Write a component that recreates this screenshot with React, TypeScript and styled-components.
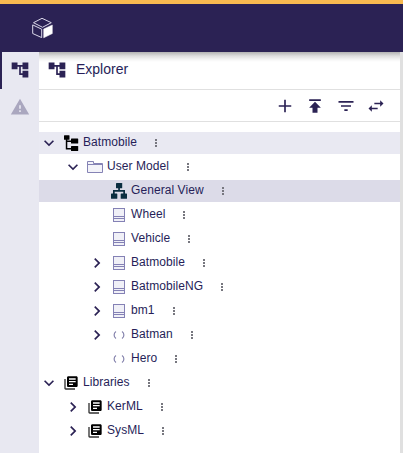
import React from 'react';
import styled, { createGlobalStyle } from 'styled-components';

const Global = createGlobalStyle`
  * { box-sizing: border-box; }
  body { margin: 0; background: #fff; font-family: "Liberation Sans", Arial, sans-serif; color: #261e58; overflow: hidden; }
`;
const Page = styled.div`display: flex; flex-direction: column; height: 453px; width: 403px;`;
const Header = styled.header`
  flex: none; height: 52px; border-top: 4px solid #f8ba50; background: #2b2254; padding: 13px 0 0 31px;
`;
const Body = styled.div`flex: 1; display: flex; min-height: 0; position: relative;`;
const Shade = styled.div`
  position: absolute; left: 39px; right: 3px; top: 0; height: 10px;
  background: linear-gradient(rgba(0,0,0,.3), rgba(0,0,0,.13) 40%, rgba(0,0,0,.03) 80%, transparent);
`;
const Rail = styled.nav`flex: none; width: 39px; background: #e8e8f1;`;
const RailTab = styled.div<{ $active?: boolean }>`
  height: 37px; display: flex; align-items: center; padding: 0 0 1px 8px;
  border-left: 2px solid ${p => (p.$active ? '#2b2254' : '#e8e8f1')};
  svg { display: block; }
`;
const Panel = styled.main`flex: 1; border-right: 3px solid #e0e0e0; background: #fff;`;
const Title = styled.div`
  display: flex; align-items: center; gap: 9px; height: 38px; padding: 0 0 2px 8px;
  border-bottom: 1px solid #e0e0e0; font-size: 14px; line-height: 16px;
`;
const TitleText = styled.span`padding-bottom: 1px;`;
const Toolbar = styled.div`
  display: flex; align-items: center; justify-content: flex-end; gap: 10.4px; height: 32px; padding: 0 14px 0 0;
  border-bottom: 1px solid #e0e0e0;
`;
const Tree = styled.div`display: flex; flex-direction: column; gap: 2px; padding-top: 10px;`;
const Row = styled.div<{ $depth: number; $bg?: string }>`
  display: flex; align-items: center; height: 22px; padding-left: ${p => p.$depth * 24}px;
  background: ${p => p.$bg || 'transparent'};
`;
const Toggle = styled.span`width: 20px; height: 20px; flex: none; svg { display: block; }`;
const IconSlot = styled.span`width: 16px; height: 16px; margin: 0 4px; flex: none; svg { display: block; }`;
const Label = styled.span`
  font-size: 12px; line-height: 18px; padding-bottom: 2px; letter-spacing: 0.07px; white-space: nowrap;
`;
const More = styled.svg`margin-left: 11px; flex: none; display: block;`;

const Glyph = ({ d, size = 20, color = '#2b2254' }: { d: string; size?: number; color?: string }) => (
  <svg width={size} height={size} viewBox="0 0 24 24" fill={color}><path d={d} /></svg>
);
const P = {
  tree: 'M22 11V3h-7v3H9V3H2v8h7V8h2v10h4v3h7v-8h-7v3h-2V8h2v3z',
  warning: 'M1 21h22L12 2 1 21zm12-3h-2v-2h2v2zm0-4h-2v-4h2v4z',
  add: 'M19.500 13h-6.500v6.500h-2v-6.500H4.500v-2h6.500V4.500h2v6.500h6.500v2z',
  publish: 'M5 4v2h14V4H5zm0 10h4v6h6v-6h4l-7-7-7 7z',
  filter: 'M10 18h4v-2h-4v2zM3 6v2h18V6H3zm3 7h12v-2H6v2z',
  swap: 'M6.99 11 3 15l3.990 4v-3H14v-2H6.990v-3zM21 9l-3.990-4v3H10v2h7.010v3L21 9z',
  down: 'M7.41 8.59 12 13.17l4.59-4.58L18 10l-6 6-6-6 1.41-1.41z',
  right: 'M8.59 16.59 13.17 12 8.59 7.41 10 6l6 6-6 6-1.41-1.41z',
  library: 'M20 2H8c-1.100 0-2 .9-2 2v12c0 1.100.9 2 2 2h12c1.100 0 2-.9 2-2V4c0-1.100-.9-2-2-2zm-1 9H9V9h10v2zm-4 4H9v-2h6v2zm4-8H9V5h10v2z',
  libraryBack: 'M4 6H2v14c0 1.100.9 2 2 2h14v-2H4V6z',
};

const Logo = () => (
  <svg width="22" height="22" viewBox="0 0 22 22" fill="none" stroke="#dcd9ea" strokeWidth="1" strokeLinejoin="round">
    <path d="M2.500 5.700 11 1.300l9.300 4.400-8.800 4.600zM1.700 7.900v8.600l9 4.100v-8.400z" />
    <path d="M12.700 12 21.300 8v8.600l-8.600 4.200z" fill="#fff" stroke="#fff" strokeWidth=".5" />
  </svg>
);

type Kind = 'project' | 'folder' | 'diagram' | 'part' | 'parens' | 'library';
const NodeIcon = ({ kind }: { kind: Kind }) => {
  switch (kind) {
    case 'project':
      return (
        <svg width="16" height="16" viewBox="0 0 16 16" fill="#000">
          <rect x="1" y="0.300" width="5.500" height="4.400" rx=".5" />
          <rect x="8" y="3.500" width="7.200" height="5" rx=".5" />
          <rect x="8" y="11" width="7.200" height="5" rx=".5" />
          <path d="M2.800 4h1.500v1.500H9V7H4.300v6H9v1.500H2.800z" />
        </svg>
      );
    case 'folder':
      return <svg width="16" height="16" viewBox="0 0 16 16" fill="#f3f3f9" stroke="#8583b5"><path d="M.5 13.500v-11h6v2h9v9z" /><path d="M.5 5.500h15" /></svg>;
    case 'diagram':
      return (
        <svg width="16" height="16" viewBox="0 0 16 16" fill="#0b2e40">
          <rect x="5" y="0" width="6.200" height="5.300" rx=".6" />
          <rect x="0" y="10.500" width="6.300" height="5.300" rx=".6" />
          <rect x="9.700" y="10.500" width="6.300" height="5.300" rx=".6" />
          <path d="M7.200 5h1.700v2H14v4h-1.700V8.700H3.700V11H2V7h5.200z" />
        </svg>
      );
    case 'part':
      return <svg width="16" height="16" viewBox="0 0 16 16" fill="#f0f0f7" stroke="#8481b5"><rect x="2.500" y="1.500" width="11" height="13" /><path d="M3 9.500h10M3 11.500h10" /></svg>;
    case 'parens':
      return <svg width="16" height="16" viewBox="0 0 16 16" fill="none" stroke="#8583ad" strokeWidth="1.200"><path d="M5 4.500C2.500 6 2.500 10 5 11.500M11 4.500c2.500 1.500 2.500 5.500 0 7" /></svg>;
    case 'library':
      return (
        <svg width="16" height="16" viewBox="0 0 24 24">
          <path d={P.libraryBack} fill="#333" />
          <path d={P.library} fill="#000" />
        </svg>
      );
  }
};

const rows: { depth: number; open?: boolean; kind: Kind; name: string; bg?: string }[] = [
  { depth: 0, open: true, kind: 'project', name: 'Batmobile', bg: '#e9e9f2' },
  { depth: 1, open: true, kind: 'folder', name: 'User Model' },
  { depth: 2, kind: 'diagram', name: 'General View', bg: '#dcdbe8' },
  { depth: 2, kind: 'part', name: 'Wheel' },
  { depth: 2, kind: 'part', name: 'Vehicle' },
  { depth: 2, open: false, kind: 'part', name: 'Batmobile' },
  { depth: 2, open: false, kind: 'part', name: 'BatmobileNG' },
  { depth: 2, open: false, kind: 'part', name: 'bm1' },
  { depth: 2, open: false, kind: 'parens', name: 'Batman' },
  { depth: 2, kind: 'parens', name: 'Hero' },
  { depth: 0, open: true, kind: 'library', name: 'Libraries' },
  { depth: 1, open: false, kind: 'library', name: 'KerML' },
  { depth: 1, open: false, kind: 'library', name: 'SysML' },
];

export default function App() {
  return (
    <Page>
      <Global />
      <Header><Logo /></Header>
      <Body>
        <Rail>
          <RailTab $active><Glyph d={P.tree} /></RailTab>
          <RailTab><Glyph d={P.warning} color="#aaa7bf" /></RailTab>
        </Rail>
        <Panel>
          <Title><Glyph d={P.tree} /><TitleText>Explorer</TitleText></Title>
          <Toolbar>{[P.add, P.publish, P.filter, P.swap].map(d => <Glyph key={d} d={d} />)}</Toolbar>
          <Tree>
            {rows.map((r, i) => (
              <Row key={i} $depth={r.depth} $bg={r.bg}>
                <Toggle>{r.open !== undefined && <Glyph d={r.open ? P.down : P.right} />}</Toggle>
                <IconSlot><NodeIcon kind={r.kind} /></IconSlot>
                <Label>{r.name}</Label>
                <More width="16" height="16" viewBox="0 0 16 16" fill="#77777f">
                  <path d="M7 4h2v2H7zM7 7h2v2H7zM7 10h2v2H7z" />
                </More>
              </Row>
            ))}
          </Tree>
        </Panel>
        <Shade />
      </Body>
    </Page>
  );
}
